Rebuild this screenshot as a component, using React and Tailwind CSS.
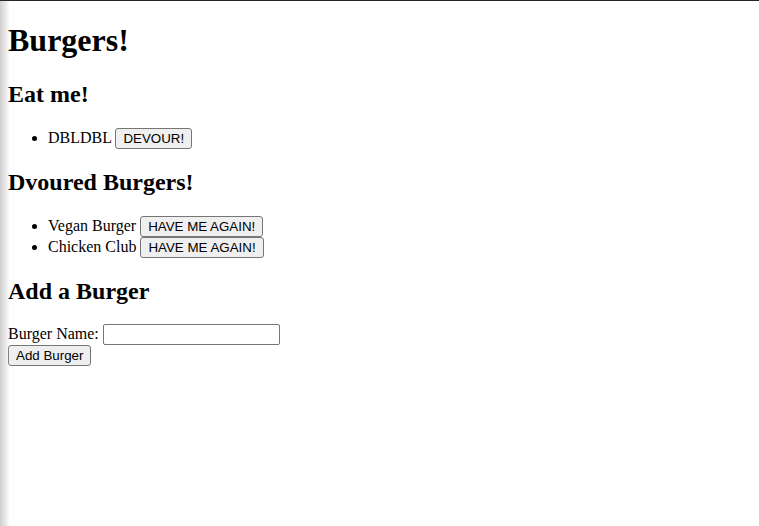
import React from "react";

const eatMe = ["DBLDBL"];
const devoured = ["Vegan Burger", "Chicken Club"];

const btn =
  "font-['Liberation_Sans',Arial,sans-serif] text-[13.33px] leading-[normal] text-black bg-[#efefef] border border-[#767676] rounded-[3px] px-[7px] py-[2px] align-baseline";

const App = () => {
  return (
    <div className="relative min-h-screen bg-white border-t border-[#262626] px-2 font-['Liberation_Serif','Times_New_Roman',serif] text-[16px] leading-[normal] text-black">
      <div className="absolute left-0 top-0 bottom-0 w-[10px] bg-gradient-to-r from-[#cfcfcf] to-transparent pointer-events-none" />

      <h1 className="text-[32px] font-bold my-[21.44px]">Burgers!</h1>

      <h2 className="text-[24px] font-bold my-[19.92px]">Eat me!</h2>
      <ul className="list-disc pl-10 my-4">
        {eatMe.map((name) => (
          <li key={name}>
            {name} <button className={btn}>DEVOUR!</button>
          </li>
        ))}
      </ul>

      <h2 className="text-[24px] font-bold my-[19.92px]">Dvoured Burgers!</h2>
      <ul className="list-disc pl-10 my-4">
        {devoured.map((name) => (
          <li key={name}>
            {name} <button className={btn}>HAVE ME AGAIN!</button>
          </li>
        ))}
      </ul>

      <h2 className="text-[24px] font-bold my-[19.92px]">Add a Burger</h2>
      <form onSubmit={(e) => e.preventDefault()}>
        <label>Burger Name:</label>{" "}
        <input
          type="text"
          className="w-[177px] h-[21px] border border-[#767676] rounded-[2px] px-[2px] font-['Liberation_Sans',Arial,sans-serif] text-[13.33px] align-baseline"
        />
        <br />
        <button className={btn}>Add Burger</button>
      </form>
    </div>
  );
};

export default App;
